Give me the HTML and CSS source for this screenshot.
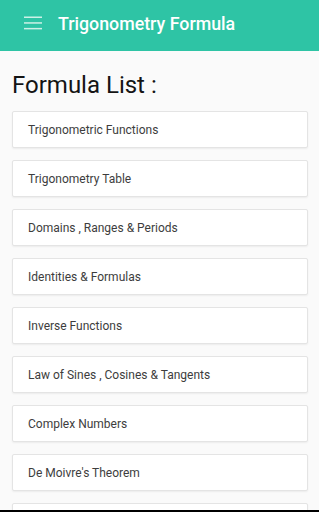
FILE: index.html
```html
<!DOCTYPE html>
<html lang="en">
<head>
    <meta charset="UTF-8">
    <meta name="viewport" content="width=device-width, initial-scale=1.0">
    <title>Trigonometry Formula</title>
    <link rel="stylesheet" href="styles.css">
</head>
<body>
    <header class="app-bar">
        <button class="menu-button" aria-label="Menu">
            <svg width="18" height="14" viewBox="0 0 18 14">
                <rect x="0" y="0.5" width="18" height="1.5" fill="#cdf1e7"/>
                <rect x="0" y="6.2" width="18" height="1.5" fill="#cdf1e7"/>
                <rect x="0" y="11.9" width="18" height="1.5" fill="#cdf1e7"/>
            </svg>
        </button>
        <h1 class="app-title">Trigonometry Formula</h1>
    </header>

    <main class="content">
        <h2 class="list-title">Formula List :</h2>
        <ul class="formula-list">
            <li class="formula-item">Trigonometric Functions</li>
            <li class="formula-item">Trigonometry Table</li>
            <li class="formula-item">Domains , Ranges &amp; Periods</li>
            <li class="formula-item">Identities &amp; Formulas</li>
            <li class="formula-item">Inverse Functions</li>
            <li class="formula-item">Law of Sines , Cosines &amp; Tangents</li>
            <li class="formula-item">Complex Numbers</li>
            <li class="formula-item">De Moivre's Theorem</li>
            <li class="formula-item"></li>
        </ul>
    </main>
</body>
</html>
```

FILE: styles.css
```css
* {
    margin: 0;
    padding: 0;
    box-sizing: border-box;
}

html, body {
    height: 100%;
}

body {
    background: #fafafa;
    font-family: Roboto, "Noto Sans", Arial, sans-serif;
    overflow: hidden;
    border-bottom: 2px solid #000;
}

.app-bar {
    display: flex;
    align-items: center;
    height: 51px;
    padding-left: 24px;
    background: #2ec4a5;
    padding-bottom: 5px;
}

.menu-button {
    display: flex;
    background: none;
    border: none;
    margin-right: 16px;
}

.app-title {
    color: #fff;
    font-size: 17.8px;
    font-weight: 500;
}

.content {
    padding: 20px 11px 0 12px;
}

.list-title {
    font-size: 24px;
    font-weight: 400;
    color: #141414;
    line-height: 28px;
    margin-bottom: 12px;
}

.formula-list {
    list-style: none;
    display: flex;
    flex-direction: column;
    gap: 12px;
}

.formula-item {
    display: flex;
    align-items: center;
    height: 37px;
    flex-shrink: 0;
    padding-left: 15px;
    background: #fff;
    border: 1px solid #e4e4e4;
    border-radius: 2px;
    box-shadow: 0 1px 2px rgba(0,0,0,0.06);
    font-size: 12px;
    color: #3d3d3d;
}
```
